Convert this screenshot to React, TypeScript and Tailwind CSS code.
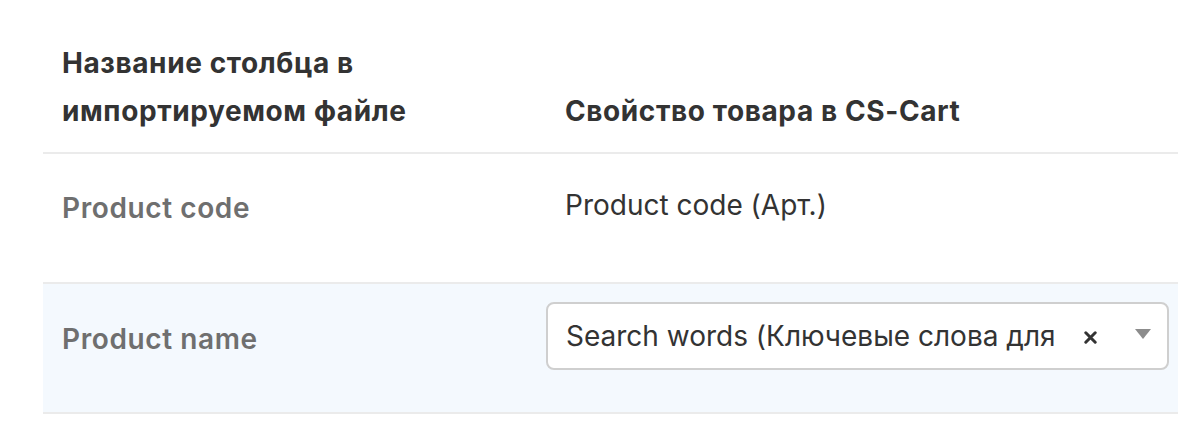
import React from "react";

export default function App() {
  const font = { fontFamily: "Inter, 'Noto Sans', sans-serif" };
  return (
    <div className="w-[1178px] h-[426px] overflow-hidden bg-white pl-[43px]" style={font}>
      <div className="w-[1200px]">
        {/* header */}
        <div className="flex h-[154px] border-b-2 border-[#ebebeb]">
          <div className="w-[503px] pl-[19px] pt-[39px] text-[28px] leading-[48px] font-bold tracking-[0.6px] text-[#333333]">
            <div>Название столбца в</div>
            <div>импортируемом файле</div>
          </div>
          <div className="flex-1 pl-[19px] pt-[87px] text-[28px] leading-[48px] font-bold tracking-[0.6px] text-[#333333]">
            Свойство товара в CS-Cart
          </div>
        </div>
        {/* row 1 */}
        <div className="flex h-[130px] border-b-2 border-[#ebebeb]">
          <div className="w-[503px] pl-[19px] pt-[30px] text-[28px] leading-[48px] font-semibold tracking-[0.6px] text-[#6f6f6f]">
            Product code
          </div>
          <div className="flex-1 pl-[19px] pt-[27px] text-[28px] leading-[48px] text-[#333333]">
            Product code (Арт.)
          </div>
        </div>
        {/* row 2 */}
        <div className="flex h-[130px] border-b-2 border-[#ebebeb] bg-[#f4f9fe]">
          <div className="w-[503px] pl-[19px] pt-[31px] text-[28px] leading-[48px] font-semibold tracking-[0.6px] text-[#6f6f6f]">
            Product name
          </div>
          <div className="flex-1 pt-[18px]">
            <div className="w-[623px] h-[68px] rounded-[8px] border-2 border-[#cfcfcf] bg-white flex items-center pl-[18px] pr-[16px]">
              <div className="flex-1 whitespace-nowrap text-[28px] leading-[34px] text-[#333333]">
                Search words (Ключевые слова для
              </div>
              <svg width="13" height="13" viewBox="0 0 13 13" className="mr-[38px] mt-[2px]">
                <path d="M1.8 1.8 L11.2 11.2 M11.2 1.8 L1.8 11.2" stroke="#333" strokeWidth="3" strokeLinecap="round" />
              </svg>
              <svg width="16" height="10" viewBox="0 0 16 10" className="mb-[4px]">
                <path d="M0 0 H16 L8 10 Z" fill="#8c8c8c" />
              </svg>
            </div>
          </div>
        </div>
      </div>
    </div>
  );
}
